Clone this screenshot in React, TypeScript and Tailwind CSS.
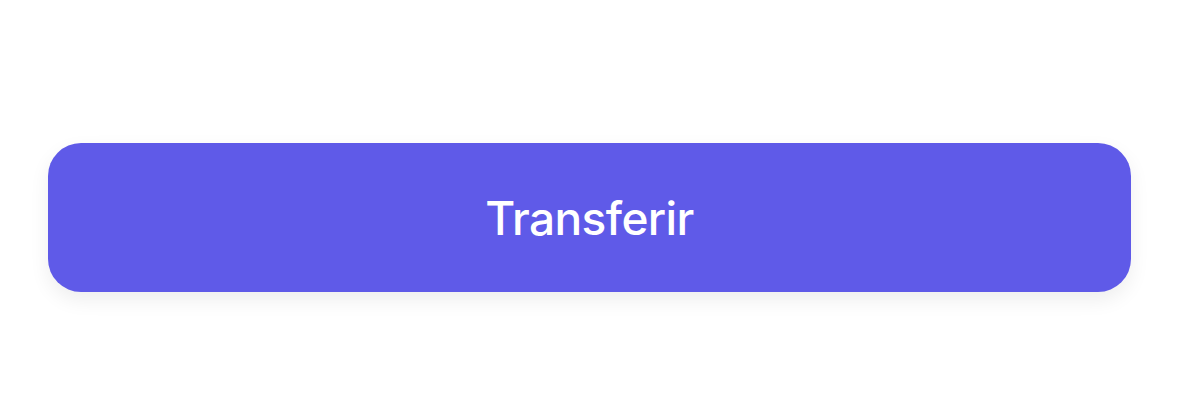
import React from "react";

const App: React.FC = () => {
  return (
    <div className="w-full h-[419px] bg-white px-[48px] pt-[143px]">
      <button
        type="button"
        className="w-full h-[149px] rounded-[33px] bg-[#5f5ae8] text-white text-[46px] font-medium tracking-[-0.6px] shadow-[0_8px_20px_rgba(0,0,0,0.07)] flex items-center justify-center pt-[2px]"
        style={{ fontFamily: "Inter, 'Noto Sans', sans-serif" }}
      >
        Transferir
      </button>
    </div>
  );
};

export default App;
